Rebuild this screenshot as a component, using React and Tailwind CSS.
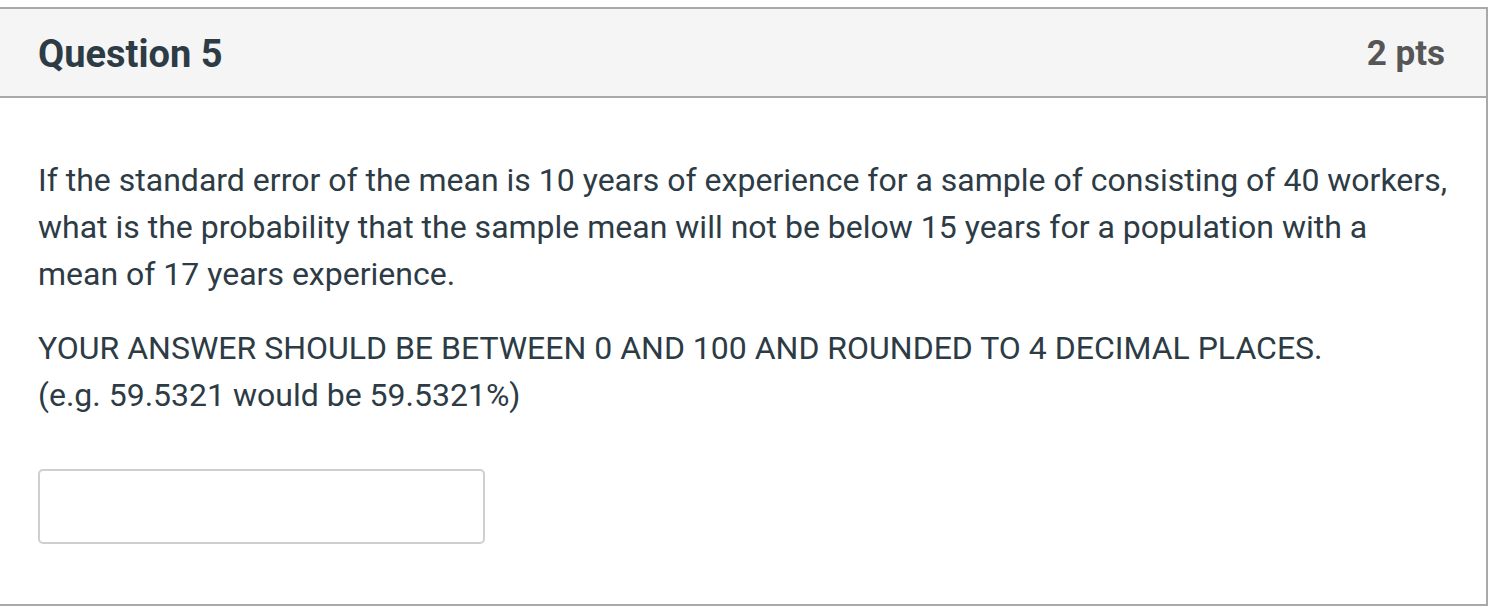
import React from "react";

const App = () => {
  return (
    <div className="w-[1488px] h-[612px] bg-white pt-[7px] font-['Roboto',sans-serif]">
      <div className="border-t-2 border-r-2 border-b-2 border-[#a9a9a9] bg-white">
        {/* Header */}
        <div className="h-[89px] bg-[#f5f5f5] border-b-2 border-[#a9a9a9] flex items-center justify-between pl-[38px] pr-[41px] pt-[3px]">
          <h2 className="text-[38px] font-bold text-[#2d3b45]">Question 5</h2>
          <div className="text-[35px] font-bold text-[#565656]">2 pts</div>
        </div>

        {/* Body */}
        <div className="pl-[38px] pt-[59px] pb-[60px] text-[#2d3b45] text-[32px] leading-[47px] whitespace-nowrap">
          <p>
            If the standard error of the mean is 10 years of experience for a sample of consisting of 40 workers,
            <br />
            what is the probability that the sample mean will not be below 15 years for a population with a
            <br />
            mean of 17 years experience.
          </p>
          <p className="mt-[27px]">
            YOUR ANSWER SHOULD BE BETWEEN 0 AND 100 AND ROUNDED TO 4 DECIMAL PLACES.
            <br />
            (e.g. 59.5321 would be 59.5321%)
          </p>
          <div className="mt-[50px]">
            <input
              type="text"
              className="w-[447px] h-[75px] rounded-[5px] border-2 border-[#cfcfcf] bg-white outline-none"
            />
          </div>
        </div>
      </div>
    </div>
  );
};

export default App;
